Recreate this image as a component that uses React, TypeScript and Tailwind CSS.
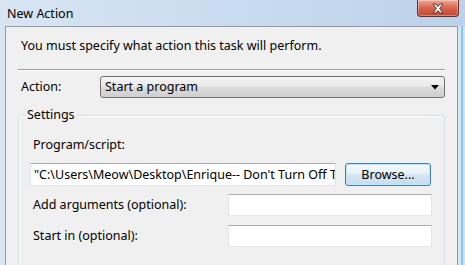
import React from "react";

const font = { fontFamily: '"Segoe UI", "Noto Sans", "Liberation Sans", sans-serif' };

function CloseButton() {
    return (
        <div className="w-[42px] h-[17px] mr-[6px] rounded-b-[4px] border border-t-0 border-[#6e2b20] bg-gradient-to-b from-[#eba99b] via-[#d5644e] to-[#c8452e] flex items-center justify-center shadow-[inset_0_0_0_1px_rgba(255,255,255,0.35)]">
            <svg width="14" height="11" viewBox="0 0 14 11">
                <path
                    d="M2 1 L5 1 L7 3.5 L9 1 L12 1 L8.6 5.5 L12 10 L9 10 L7 7.5 L5 10 L2 10 L5.4 5.5 Z"
                    fill="#ffffff"
                    stroke="#4a2a26"
                    strokeWidth="0.9"
                    strokeLinejoin="round"
                />
            </svg>
        </div>
    );
}

function TextBox({ className, value }: { className: string; value?: string }) {
    return (
        <input
            readOnly
            value={value ?? ""}
            style={font}
            className={
                "bg-white border border-[#e2e3ea] border-t-[#abadb3] border-b-[#e3e9ef] pl-[3px] pr-0 text-[12.5px] text-black outline-none " +
                className
            }
        />
    );
}

export default function App() {
    return (
        <div
            style={font}
            className="w-[465px] h-[265px] overflow-hidden flex flex-col bg-gradient-to-r from-[#d8e5f3] via-[#c9dbef] to-[#bcd2ea] text-[12.5px] leading-[16px] text-black"
        >
            {/* Barra de título */}
            <div className="h-[26px] shrink-0 flex items-start justify-between">
                <span className="ml-[7px] mt-[6px]">New Action</span>
                <CloseButton />
            </div>

            <div className="flex flex-1">
                <div className="w-[5px] shrink-0" />

                {/* Área do cliente */}
                <div className="w-[453px] shrink-0 bg-[#f0f0f0] border border-b-0 border-[#8d9bab] px-[12px] pt-[11px]">
                    <p className="ml-[3px]">You must specify what action this task will perform.</p>

                    <div className="mt-[15px] h-[2px] border-t border-[#a0a0a0] border-b border-b-white" />

                    {/* Ação */}
                    <div className="mt-[5px] flex items-center">
                        <span className="ml-[3px] w-[79px]">Action:</span>
                        <div className="flex-1 h-[22px] rounded-[3px] border border-[#707070] bg-[linear-gradient(#f3f3f3,#ebebeb_45%,#dddddd_50%,#cfcfcf)] flex items-center justify-between pl-[4px] pr-[5px]">
                            <span>Start a program</span>
                            <svg width="8" height="5" viewBox="0 0 8 5">
                                <path d="M0 0 H8 L4 4.5 Z" fill="#000" />
                            </svg>
                        </div>
                    </div>

                    {/* Configurações */}
                    <div className="relative mt-[17px] h-[160px] rounded-[3px] border border-[#d5dfe5] shadow-[inset_1px_1px_0_#ffffff] pl-[11px] pr-[12px] pt-[21px]">
                        <span className="absolute left-[6px] top-[-9px] px-[2px] bg-[#f0f0f0]">Settings</span>

                        <p className="ml-[3px]">Program/script:</p>

                        <div className="mt-[9px] flex items-center gap-[9px]">
                            <TextBox
                                className="w-[306px] h-[23px]"
                                value={'"C:\\Users\\Meow\\Desktop\\Enrique-- Don\'t Turn Off The Lights.mp3"'}
                            />
                            <button className="w-[86px] h-[23px] mt-[1px] mr-[1px] rounded-[3px] border border-[#3c7fb1] bg-[linear-gradient(#f4f9fd,#e8f2fa_45%,#d6e6f2_50%,#c9dcec)] shadow-[inset_0_0_0_1px_#bfe6fa]">
                                Browse...
                            </button>
                        </div>

                        <div className="mt-[8px] flex items-center">
                            <span className="ml-[3px] flex-1">Add arguments (optional):</span>
                            <TextBox className="w-[204px] h-[22px]" />
                        </div>

                        <div className="mt-[9px] flex items-center">
                            <span className="ml-[3px] flex-1">Start in (optional):</span>
                            <TextBox className="w-[204px] h-[22px]" />
                        </div>
                    </div>
                </div>

                {/* Borda direita */}
                <div className="flex-1 flex">
                    <div className="w-[3px] bg-[#d7e5f3]" />
                    <div className="w-[2px] bg-[#86c9ef]" />
                    <div className="flex-1 bg-[#cfe2f4]" />
                </div>
            </div>
        </div>
    );
}
